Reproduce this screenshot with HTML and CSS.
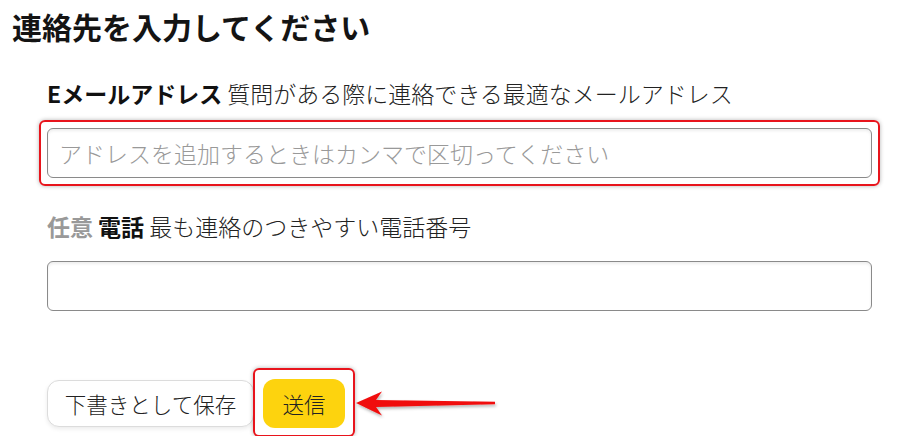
FILE: index.html
```html
<!DOCTYPE html>
<html lang="ja">
<head>
    <meta charset="utf-8">
    <title>連絡先を入力してください</title>
    <link rel="stylesheet" href="styles.css">
</head>
<body>
    <div class="page">
        <h1 class="page-title">連絡先を入力してください</h1>

        <form class="contact-form" id="contactForm">
            <div class="field">
                <label class="field-label" for="email">
                    <b>Eメールアドレス</b> 質問がある際に連絡できる最適なメールアドレス
                </label>
                <div class="highlight">
                    <input class="text-input" type="text" id="email" placeholder="アドレスを追加するときはカンマで区切ってください">
                </div>
            </div>

            <div class="field">
                <label class="field-label" for="phone">
                    <span class="optional">任意</span> <b>電話</b> 最も連絡のつきやすい電話番号
                </label>
                <input class="text-input" type="tel" id="phone">
            </div>

            <div class="actions">
                <button type="button" class="btn btn-draft">下書きとして保存</button>
                <div class="highlight highlight-btn">
                    <button type="submit" class="btn btn-send">送信</button>
                </div>
                <!-- annotation arrow -->
                <svg class="pointer-arrow" width="145" height="30" viewBox="0 0 145 30">
                    <defs>
                        <filter id="arrowShadow" x="-10%" y="-40%" width="120%" height="180%">
                            <feDropShadow dx="1" dy="2" stdDeviation="1.5" flood-color="#000" flood-opacity="0.3"/>
                        </filter>
                    </defs>
                    <path d="M1 14 L27 2.5 L21 11 L140 12.8 L140 15.2 L21 18 L27 26.5 Z" fill="#f00c0c" filter="url(#arrowShadow)"/>
                </svg>
            </div>
        </form>
    </div>
</body>
</html>
```

FILE: styles.css
```css
body {
    margin: 0;
    background: #fff;
    color: #1c1c1c;
    font-family: "Noto Sans CJK JP", "Noto Sans", sans-serif;
}
.page {
    padding: 8px 12px;
}
.page-title {
    margin: 0;
    font-size: 30px;
    line-height: 36px;
    font-weight: 700;
    color: #141414;
}
.contact-form {
    width: 825px;
    margin: 33px 0 0 35px;
}
.field {
    margin-bottom: 32px;
}
.field-label {
    display: block;
    font-size: 23px;
    font-weight: 300;
    line-height: 32px;
    margin-bottom: 19px;
    color: #222;
}
.field-label b {
    font-weight: 700;
    color: #111;
}
.optional {
    font-weight: 700;
    color: #999;
}
.text-input {
    display: block;
    box-sizing: border-box;
    width: 100%;
    height: 50px;
    padding: 0 11px;
    border: 1px solid #8a8a8a;
    border-radius: 6px;
    box-shadow: inset 0 2px 3px rgba(0, 0, 0, 0.07);
    font-family: inherit;
    font-size: 23px;
    font-weight: 300;
    color: #222;
    background: #fff;
}
.text-input::placeholder {
    color: #999;
}
.highlight {
    margin: -8px;
    padding: 6px;
    border: 2px solid #e8141c;
    border-radius: 6px;
    box-shadow: 0 0 4px rgba(0, 0, 0, 0.3);
}
.actions {
    display: flex;
    align-items: center;
    gap: 9px;
    margin-top: 68px;
}
.btn {
    font-family: inherit;
    font-size: 21.5px;
    font-weight: 300;
    border-radius: 12px;
    cursor: pointer;
}
.btn-draft {
    width: 207px;
    height: 47px;
    border: 1px solid #dcdcdc;
    background: #fff;
    color: #222;
    box-shadow: 0 2px 4px rgba(0, 0, 0, 0.08);
}
.highlight-btn {
    margin: -11px -10px -9px -10px;
    padding: 9px 8px 7px 8px;
}
.btn-send {
    display: block;
    width: 82px;
    height: 49px;
    border: none;
    background: #fdd30e;
    color: #222;
}
.pointer-arrow {
    display: block;
    margin-left: 1px;
}
```
